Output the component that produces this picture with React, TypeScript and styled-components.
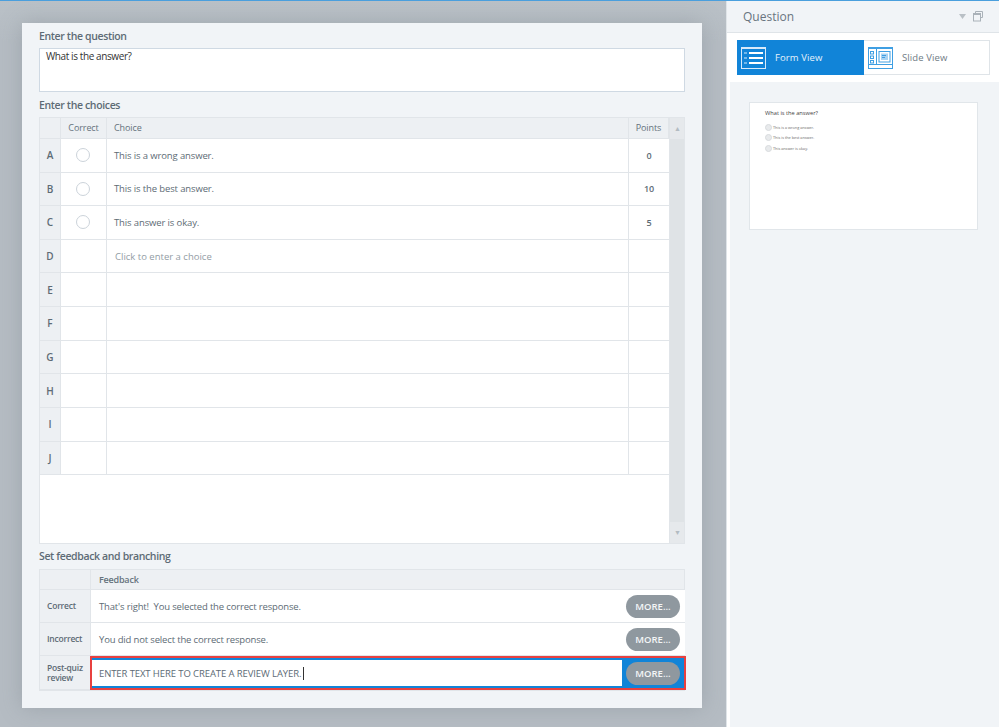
import React from "react";
import styled, { createGlobalStyle } from "styled-components";

const Global = createGlobalStyle`
  html, body { margin: 0; padding: 0; background: #fff; }
  body { font-family: "Open Sans", "Noto Sans", sans-serif; color: #5d6b75; overflow: hidden; }
  * { box-sizing: border-box; }
`;

const Page = styled.div`
  width: 999px; height: 727px; display: flex; overflow: hidden;
  border-top: 1px solid #4a9fdd; background: #fff;
`;
const Stage = styled.main`
  width: 726px; flex: none; height: 100%; padding: 22px 24px 18px 22px;
  background: linear-gradient(#bac1c7, #b5bcc3 40px);
`;
const Card = styled.section`
  width: 680px; height: 685px; background: #f1f4f7; padding: 5px 17px 0;
  box-shadow: 0 0 20px rgba(125, 133, 141, 0.42);
  display: flex; flex-direction: column;
`;
const SectionLabel = styled.h2`
  margin: 0; font-size: 10.5px; line-height: 16px; font-weight: 600; color: #5d6b75; letter-spacing: -0.36px;
`;
const QuestionBox = styled.div`
  height: 44px; margin-top: 4px; background: #fff; border: 1px solid #cfd9e3;
  padding: 0 6px; font-size: 10px; line-height: 14px; color: #333; letter-spacing: -0.4px;
`;
const ChoicesLabel = styled(SectionLabel)`margin-top: 5px;`;
const FeedbackLabel = styled(SectionLabel)`margin-top: 4px;`;
const ChoicesTable = styled.div`
  margin-top: 4px; width: 646px; height: 427px; background: #fff; border: 1px solid #e1e5e9;
  display: grid; grid-template-columns: 1fr 16px; overflow: hidden;
`;
const ChoiceColumns = styled.div`display: flex; flex-direction: column;`;
const ChoiceRow = styled.div<{ $h?: number }>`
  display: grid; grid-template-columns: 21px 46px 522px 40px;
  height: ${(p) => p.$h ?? 33.65}px; flex: none;
`;
const HeadCell = styled.div<{ $center?: boolean }>`
  background: #edf0f3; border-right: 1px solid #e1e5e9; border-bottom: 1px solid #e1e5e9;
  font-size: 9px; display: flex; align-items: center; color: #65727c; letter-spacing: -0.1px;
  padding: 0 7px 1px; justify-content: ${(p) => (p.$center ? "center" : "flex-start")};
`;
const LetterCell = styled.div`
  background: #edf0f3; border-right: 1px solid #e1e5e9; border-bottom: 1px solid #e1e5e9;
  font-size: 10px; font-weight: 600; display: flex; align-items: center; justify-content: center; color: #5d6b75;
`;
const BodyCell = styled.div<{ $center?: boolean; $bold?: boolean; $muted?: boolean }>`
  background: #fff; border-right: 1px solid #e1e5e9; border-bottom: 1px solid #e1e5e9;
  font-size: ${(p) => (p.$bold ? 9 : 9.5)}px; font-weight: ${(p) => (p.$bold ? 600 : 400)};
  display: flex; align-items: center; padding: 0 ${(p) => (p.$center ? 0 : p.$muted ? 8 : 7)}px;
  letter-spacing: ${(p) => (p.$muted ? 0 : -0.13)}px;
  color: ${(p) => (p.$muted ? "#939da5" : "#5d6b75")};
  justify-content: ${(p) => (p.$center ? "center" : "flex-start")};
`;
const RadioCell = styled(BodyCell)`padding-right: 1px;`;
const LastCell = styled(BodyCell)`border-right: none;`;
const Radio = styled.span`
  width: 14px; height: 14px; border-radius: 50%; background: #fff; border: 1px solid #ccd3da;
`;
const Scrollbar = styled.div`
  background: #dfe3e6; display: flex; flex-direction: column; justify-content: space-between; align-items: center;
  border-left: 1px solid #e1e5e9;
`;
const ScrollButton = styled.div`
  width: 100%; height: 21px; display: flex; align-items: center; justify-content: center;
  background: #e6e9ec; color: #b3bbc2; font-size: 7px; line-height: 1;
`;
const FeedbackTable = styled.div`
  margin-top: 5px; width: 646px; display: flex; flex-direction: column;
  border: 1px solid #e1e5e9; border-right: none; height: 122px;
`;
const FeedbackRow = styled.div<{ $h: number }>`
  display: grid; grid-template-columns: 51px 1fr; height: ${(p) => p.$h}px; flex: none;
`;
const FeedbackHead = styled(HeadCell)`
  font-weight: 600; font-size: 9px; letter-spacing: -0.2px; padding-left: 8px;
  &:last-child { border-right: 1px solid #e1e5e9; }
`;
const RowTitle = styled.div`
  background: #edf0f3; border-right: 1px solid #e1e5e9; border-bottom: 1px solid #e1e5e9;
  font-size: 8.5px; font-weight: 600; line-height: 10px; color: #5d6b75; letter-spacing: -0.22px;
  display: flex; align-items: center; padding: 0 0 0 7px;
`;
const FeedbackCell = styled.div`
  background: #fff; border-bottom: 1px solid #e1e5e9; display: flex; align-items: center;
  justify-content: space-between; padding: 0 5px 0 8px; font-size: 9.5px; color: #5d6b75; letter-spacing: -0.16px;
`;
const FocusCell = styled.div`
  margin-left: -1px; height: 34px; width: 596px; border: 2px solid #e8403f; background: #1184d8;
  display: flex; align-items: center; justify-content: space-between; padding: 0 4px 0 0;
`;
const FocusInput = styled.div`
  width: 530px; height: 26px; background: #fff; display: flex; align-items: center;
  padding: 0 7px; font-size: 9.5px; color: #5d6b75; letter-spacing: -0.1px;
`;
const Caret = styled.span`
  width: 1px; height: 13px; background: #333; margin-left: 2px;
`;
const MoreButton = styled.button`
  width: 54px; height: 23px; border-radius: 12px; border: none; background: #8f989f; color: #f4f6f7;
  font: 600 9.5px "Open Sans", sans-serif; padding: 0; display: flex; align-items: center; justify-content: center;
`;
const Side = styled.aside`
  width: 273px; flex: none; height: 100%; border-left: 1px solid #dfe4e8; display: flex; flex-direction: column;
`;
const SideHeader = styled.header`
  height: 32px; flex: none; background: #f1f4f7; border-bottom: 1px solid #dfe4e8;
  display: flex; align-items: center; justify-content: space-between; padding: 0 16px 0 16px;
`;
const SideTitle = styled.h1`margin: 0; font-size: 12px; font-weight: 400; color: #69757f;`;
const HeaderTools = styled.div`display: flex; align-items: center; gap: 7px;`;
const TabBar = styled.div`
  height: 49px; flex: none; padding: 7px 9px 7px 10px; display: flex; background: #fff;
`;
const Tab = styled.div<{ $active?: boolean }>`
  flex: 1; display: flex; align-items: center; gap: 9px; font-size: 9.5px; letter-spacing: 0.1px;
  padding-left: ${(p) => (p.$active ? 3 : 4)}px;
  background: ${(p) => (p.$active ? "#1184d8" : "#fff")};
  color: ${(p) => (p.$active ? "#e6f2fb" : "#6f7b85")};
  border: 1px solid ${(p) => (p.$active ? "#1184d8" : "#dfe4e8")};
  border-left: ${(p) => (p.$active ? undefined : "none")};
`;
const ActiveTab = styled(Tab)`flex: 0 0 127px;`;
const PreviewPane = styled.div`
  flex: 1; margin-left: 3px; background: #f1f4f7; padding: 20px 20px 0 19px;
`;
const Slide = styled.div`
  width: 229px; height: 128px; background: #fff; border: 1px solid #e1e6ea; padding: 6px 15px;
`;
const SlideQuestion = styled.div`font-size: 5.7px; font-weight: 500; color: #444; line-height: 8px; margin-bottom: 5px;`;
const SlideChoice = styled.div`
  display: flex; align-items: center; gap: 1px; height: 10.6px; font-size: 3.8px; color: #666;
`;
const SlideDot = styled.span`
  width: 7px; height: 7px; border-radius: 50%; background: #e8eaec; border: 1px solid #d8dbde; flex: none;
`;

const FormIcon = () => (
  <svg width="25" height="22" viewBox="0 0 25 22" fill="none">
    <rect x="0.5" y="0.5" width="24" height="21" stroke="#d7eafa" strokeWidth="1" />
    <rect x="0" y="0" width="25" height="2" fill="#d7eafa" />
    <path d="M3 6h3M3 11h3M3 16h3" stroke="#d7eafa" />
    <path d="M8 6h14M8 11h14M8 16h14" stroke="#fff" strokeWidth="2" />
  </svg>
);
const SlideIcon = () => (
  <svg width="25" height="22" viewBox="0 0 25 22" fill="none">
    <rect x="0.5" y="0.5" width="24" height="21" stroke="#3f9fe3" />
    <rect x="0" y="0" width="25" height="2" fill="#3f9fe3" />
    <path d="M8.5 2v15.5M0.5 17.5h24" stroke="#3f9fe3" />
    <rect x="2.5" y="4.5" width="3" height="2.5" stroke="#3f9fe3" />
    <rect x="2.5" y="9" width="3" height="2.5" stroke="#3f9fe3" />
    <rect x="2.5" y="13.5" width="3" height="2.5" stroke="#3f9fe3" />
    <rect x="11" y="4.5" width="11" height="10.5" stroke="#3f9fe3" />
    <rect x="13" y="6.5" width="7" height="6.5" fill="#a9d3f2" />
    <path d="M14 8.5h4M14 10.5h3" stroke="#3f9fe3" />
  </svg>
);
const RestoreIcon = () => (
  <svg width="10" height="11" viewBox="0 0 10 11" fill="none">
    <path d="M2.5 2.5V.5h7v6H7.5" stroke="#aab2b9" />
    <rect x="0.5" y="2.5" width="7" height="7.5" stroke="#aab2b9" />
    <rect x="0.5" y="2.5" width="7" height="1.5" fill="#aab2b9" />
  </svg>
);
const DropArrow = () => (
  <svg width="7" height="5" viewBox="0 0 7 5"><path d="M0 0h7L3.5 5z" fill="#b9c0c6" /></svg>
);

const choices = [
  { l: "A", text: "This is a wrong answer.", pts: "0" },
  { l: "B", text: "This is the best answer.", pts: "10" },
  { l: "C", text: "This answer is okay.", pts: "5" },
];
const empties = ["E", "F", "G", "H", "I", "J"];

export default function App() {
  return (
    <>
      <Global />
      <Page>
        <Stage>
          <Card>
            <SectionLabel>Enter the question</SectionLabel>
            <QuestionBox>What is the answer?</QuestionBox>
            <ChoicesLabel>Enter the choices</ChoicesLabel>
            <ChoicesTable>
              <ChoiceColumns>
                <ChoiceRow $h={20.9}>
                  <HeadCell />
                  <HeadCell $center>Correct</HeadCell>
                  <HeadCell>Choice</HeadCell>
                  <HeadCell $center>Points</HeadCell>
                </ChoiceRow>
                {choices.map((c) => (
                  <ChoiceRow key={c.l}>
                    <LetterCell>{c.l}</LetterCell>
                    <RadioCell $center><Radio /></RadioCell>
                    <BodyCell>{c.text}</BodyCell>
                    <LastCell $center $bold>{c.pts}</LastCell>
                  </ChoiceRow>
                ))}
                <ChoiceRow>
                  <LetterCell>D</LetterCell>
                  <BodyCell />
                  <BodyCell $muted>Click to enter a choice</BodyCell>
                  <LastCell />
                </ChoiceRow>
                {empties.map((l) => (
                  <ChoiceRow key={l}>
                    <LetterCell>{l}</LetterCell>
                    <BodyCell />
                    <BodyCell />
                    <LastCell />
                  </ChoiceRow>
                ))}
              </ChoiceColumns>
              <Scrollbar>
                <ScrollButton>▲</ScrollButton>
                <ScrollButton>▼</ScrollButton>
              </Scrollbar>
            </ChoicesTable>
            <FeedbackLabel>Set feedback and branching</FeedbackLabel>
            <FeedbackTable>
              <FeedbackRow $h={20}>
                <FeedbackHead />
                <FeedbackHead>Feedback</FeedbackHead>
              </FeedbackRow>
              <FeedbackRow $h={33}>
                <RowTitle>Correct</RowTitle>
                <FeedbackCell>That's right!&nbsp; You selected the correct response.<MoreButton>MORE...</MoreButton></FeedbackCell>
              </FeedbackRow>
              <FeedbackRow $h={33}>
                <RowTitle>Incorrect</RowTitle>
                <FeedbackCell>You did not select the correct response.<MoreButton>MORE...</MoreButton></FeedbackCell>
              </FeedbackRow>
              <FeedbackRow $h={34}>
                <RowTitle>Post-quiz review</RowTitle>
                <FocusCell>
                  <FocusInput>ENTER TEXT HERE TO CREATE A REVIEW LAYER.<Caret /></FocusInput>
                  <MoreButton>MORE...</MoreButton>
                </FocusCell>
              </FeedbackRow>
            </FeedbackTable>
          </Card>
        </Stage>
        <Side>
          <SideHeader>
            <SideTitle>Question</SideTitle>
            <HeaderTools><DropArrow /><RestoreIcon /></HeaderTools>
          </SideHeader>
          <TabBar>
            <ActiveTab $active><FormIcon />Form View</ActiveTab>
            <Tab><SlideIcon />Slide View</Tab>
          </TabBar>
          <PreviewPane>
            <Slide>
              <SlideQuestion>What is the answer?</SlideQuestion>
              {choices.map((c) => (
                <SlideChoice key={c.l}><SlideDot />{c.text}</SlideChoice>
              ))}
            </Slide>
          </PreviewPane>
        </Side>
      </Page>
    </>
  );
}
